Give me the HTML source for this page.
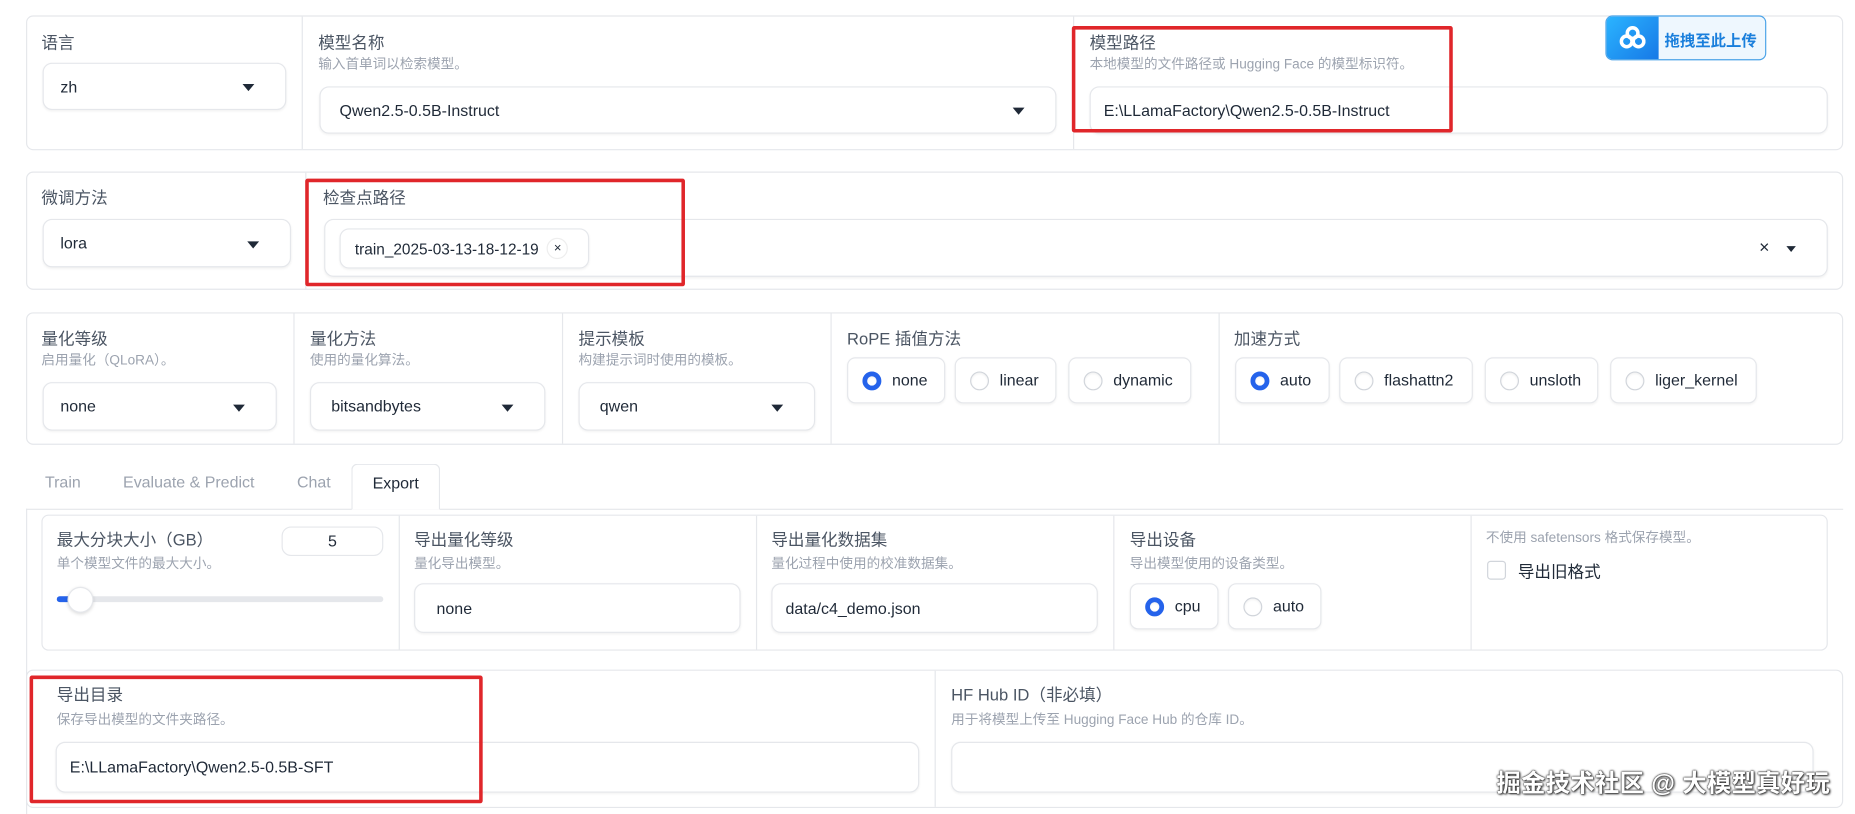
<!DOCTYPE html>
<html><head><meta charset="utf-8"><style>
*{box-sizing:border-box;margin:0;padding:0}
body{width:1855px;height:814px;overflow:hidden;background:#fff;font-family:"Liberation Sans","Noto Sans CJK SC",sans-serif;color:#374151}
#w{position:absolute;left:0;top:0;width:1568px;height:688px;transform:scale(1.18304);transform-origin:0 0}
.a{position:absolute}
.p{position:absolute;border:1px solid #e5e7eb;border-radius:6px;background:#fff}
.vl{position:absolute;width:1px;background:#e5e7eb}
.lb{position:absolute;font-size:14px;color:#4b5563;white-space:nowrap}
.sb{position:absolute;font-size:11.5px;color:#9ca3af;white-space:nowrap}
.in{position:absolute;border:1px solid #e5e7eb;border-radius:8px;background:#fff;box-shadow:0 1px 2px rgba(0,0,0,.05);font-size:13.5px;color:#1f2937;display:flex;align-items:center;padding-left:14px;white-space:nowrap}
.dd:after{content:"";position:absolute;right:26px;top:50%;margin-top:-2px;border-left:5px solid transparent;border-right:5px solid transparent;border-top:6px solid #1f2937}
.rd{position:absolute;border:1px solid #e5e7eb;border-radius:7px;background:#fff;box-shadow:0 1px 2px rgba(0,0,0,.05);font-size:13.5px;color:#1f2937;display:flex;align-items:center;padding-left:12px;height:39px;white-space:nowrap}
.rd i{display:inline-block;width:16px;height:16px;border-radius:50%;border:1px solid #d1d5db;margin-right:9px;box-shadow:inset 0 1px 2px rgba(0,0,0,.06)}
.rd i.on{border:4.5px solid #2563eb;background:#fff}
.red{position:absolute;border:3px solid #e0262a;border-radius:2px}
.tab{position:absolute;top:400px;font-size:13.5px;color:#9ca3af}
</style></head><body><div id="w">

<div class="p" style="left:22px;top:13px;width:1536px;height:114px"></div>
<div class="vl" style="left:255px;top:14px;height:112px"></div>
<div class="vl" style="left:907px;top:14px;height:112px"></div>
<div class="lb" style="left:35px;top:26px">语言</div>
<div class="in dd" style="left:36px;top:53px;width:206px;height:40px">zh</div>
<div class="lb" style="left:269px;top:26px">模型名称</div>
<div class="sb" style="left:269px;top:46px">输入首单词以检索模型。</div>
<div class="in dd" style="left:270px;top:73px;width:623px;height:40px;padding-left:16px">Qwen2.5-0.5B-Instruct</div>
<div class="lb" style="left:921px;top:26px">模型路径</div>
<div class="sb" style="left:921px;top:46px">本地模型的文件路径或 Hugging Face 的模型标识符。</div>
<div class="in" style="left:921px;top:73px;width:624px;height:40px;padding-left:11px">E:\LLamaFactory\Qwen2.5-0.5B-Instruct</div>
<div class="red" style="left:906px;top:22px;width:322px;height:90px"></div>
<div class="a" style="left:1357px;top:13px;width:136px;height:38px;border:1px solid #4ba3e8;border-radius:6px;background:#eef7fe;overflow:hidden">
 <div class="a" style="left:0;top:0;width:44px;height:38px;background:linear-gradient(135deg,#2bb4ff,#1677e6)"></div>
 <svg class="a" style="left:11px;top:8px" width="22" height="20" viewBox="0 0 22 20"><circle cx="11" cy="6" r="4.5" fill="none" stroke="#fff" stroke-width="3"/><circle cx="6" cy="13" r="4.5" fill="none" stroke="#fff" stroke-width="3"/><circle cx="16" cy="13" r="4.5" fill="none" stroke="#fff" stroke-width="3"/></svg>
 <div class="a" style="left:49px;top:10px;font-size:13px;font-weight:bold;color:#1a7fdc">拖拽至此上传</div>
</div>

<div class="p" style="left:22px;top:145px;width:1536px;height:100px"></div>
<div class="vl" style="left:258px;top:146px;height:98px"></div>
<div class="lb" style="left:35px;top:157px">微调方法</div>
<div class="in dd" style="left:36px;top:185px;width:210px;height:41px">lora</div>
<div class="lb" style="left:273px;top:157px">检查点路径</div>
<div class="in" style="left:274px;top:185px;width:1271px;height:49px"></div>
<div class="in" style="left:287px;top:193px;width:211px;height:34px;font-size:13px;padding-left:12px">train_2025-03-13-18-12-19<span style="display:inline-block;width:18px;height:18px;border-radius:50%;border:1px solid #eee;margin-left:7px;font-size:11px;text-align:center;line-height:16px">×</span></div>
<div class="a" style="left:1487px;top:201px;font-size:15px;color:#1f2937">×</div>
<div class="a" style="left:1510px;top:208px;border-left:4px solid transparent;border-right:4px solid transparent;border-top:5px solid #1f2937"></div>
<div class="red" style="left:258px;top:151px;width:321px;height:91px"></div>

<div class="p" style="left:22px;top:264px;width:1536px;height:112px"></div>
<div class="vl" style="left:248px;top:265px;height:110px"></div>
<div class="vl" style="left:475px;top:265px;height:110px"></div>
<div class="vl" style="left:702px;top:265px;height:110px"></div>
<div class="vl" style="left:1030px;top:265px;height:110px"></div>
<div class="lb" style="left:35px;top:276px">量化等级</div>
<div class="sb" style="left:35px;top:296px">启用量化（QLoRA）。</div>
<div class="in dd" style="left:36px;top:323px;width:198px;height:41px">none</div>
<div class="lb" style="left:262px;top:276px">量化方法</div>
<div class="sb" style="left:262px;top:296px">使用的量化算法。</div>
<div class="in dd" style="left:262px;top:323px;width:199px;height:41px;padding-left:17px">bitsandbytes</div>
<div class="lb" style="left:489px;top:276px">提示模板</div>
<div class="sb" style="left:489px;top:296px">构建提示词时使用的模板。</div>
<div class="in dd" style="left:489px;top:323px;width:200px;height:41px;padding-left:17px">qwen</div>
<div class="lb" style="left:716px;top:276px">RoPE 插值方法</div>
<div class="rd" style="left:716px;top:302px;width:83px"><i class="on"></i>none</div>
<div class="rd" style="left:807px;top:302px;width:86px"><i></i>linear</div>
<div class="rd" style="left:903px;top:302px;width:104px"><i></i>dynamic</div>
<div class="lb" style="left:1043px;top:276px">加速方式</div>
<div class="rd" style="left:1044px;top:302px;width:80px"><i class="on"></i>auto</div>
<div class="rd" style="left:1132px;top:302px;width:113px"><i></i>flashattn2</div>
<div class="rd" style="left:1255px;top:302px;width:96px"><i></i>unsloth</div>
<div class="rd" style="left:1361px;top:302px;width:124px"><i></i>liger_kernel</div>

<div class="tab" style="left:38px">Train</div>
<div class="tab" style="left:104px">Evaluate &amp; Predict</div>
<div class="tab" style="left:251px">Chat</div>
<div class="a" style="left:297px;top:392px;width:75px;height:39px;border:1px solid #e5e7eb;border-bottom:1px solid #fff;border-radius:5px 5px 0 0;background:#fff;font-size:13.5px;color:#1f2937;text-align:center;padding-top:8px;z-index:2">Export</div>
<div class="a" style="left:22px;top:430px;width:1536px;height:1px;background:#e5e7eb"></div>
<div class="vl" style="left:22px;top:430px;height:258px"></div>

<div class="p" style="left:35px;top:435px;width:1510px;height:115px"></div>
<div class="vl" style="left:337px;top:436px;height:113px"></div>
<div class="vl" style="left:639px;top:436px;height:113px"></div>
<div class="vl" style="left:941px;top:436px;height:113px"></div>
<div class="vl" style="left:1243px;top:436px;height:113px"></div>
<div class="lb" style="left:48px;top:446px">最大分块大小（GB）</div>
<div class="sb" style="left:48px;top:468px">单个模型文件的最大大小。</div>
<div class="in" style="left:238px;top:445px;width:86px;height:25px;justify-content:center;padding-left:0;box-shadow:none">5</div>
<div class="a" style="left:48px;top:504px;width:276px;height:5px;border-radius:3px;background:#e5e7eb"></div>
<div class="a" style="left:48px;top:504px;width:12px;height:5px;border-radius:3px;background:#2563eb"></div>
<div class="a" style="left:57px;top:496px;width:22px;height:22px;border-radius:50%;background:#fff;border:1px solid #e5e7eb;box-shadow:0 1px 3px rgba(0,0,0,.15)"></div>
<div class="lb" style="left:350px;top:446px">导出量化等级</div>
<div class="sb" style="left:350px;top:468px">量化导出模型。</div>
<div class="in" style="left:350px;top:493px;width:276px;height:42px;padding-left:18px">none</div>
<div class="lb" style="left:652px;top:446px">导出量化数据集</div>
<div class="sb" style="left:652px;top:468px">量化过程中使用的校准数据集。</div>
<div class="in" style="left:652px;top:493px;width:276px;height:42px;padding-left:11px">data/c4_demo.json</div>
<div class="lb" style="left:955px;top:446px">导出设备</div>
<div class="sb" style="left:955px;top:468px">导出模型使用的设备类型。</div>
<div class="rd" style="left:955px;top:493px;width:75px"><i class="on"></i>cpu</div>
<div class="rd" style="left:1038px;top:493px;width:79px"><i></i>auto</div>
<div class="sb" style="left:1256px;top:446px">不使用 safetensors 格式保存模型。</div>
<div class="a" style="left:1257px;top:474px;width:16px;height:16px;border:1px solid #d1d5db;border-radius:3px"></div>
<div class="a" style="left:1283px;top:473px;font-size:14px;color:#1f2937">导出旧格式</div>

<div class="p" style="left:22px;top:566px;width:1536px;height:117px"></div>
<div class="vl" style="left:790px;top:567px;height:115px"></div>
<div class="lb" style="left:48px;top:577px">导出目录</div>
<div class="sb" style="left:48px;top:600px">保存导出模型的文件夹路径。</div>
<div class="in" style="left:47px;top:627px;width:730px;height:43px;padding-left:11px">E:\LLamaFactory\Qwen2.5-0.5B-SFT</div>
<div class="lb" style="left:804px;top:577px">HF Hub ID（非必填）</div>
<div class="sb" style="left:804px;top:600px">用于将模型上传至 Hugging Face Hub 的仓库 ID。</div>
<div class="in" style="left:804px;top:627px;width:729px;height:43px"></div>
<div class="red" style="left:25px;top:571px;width:383px;height:108px"></div>
<div class="a" style="left:1265px;top:645px;font-size:20.5px;font-weight:bold;color:#fff;text-shadow:0 0 2px #333,0 0 1px #000,1px 1px 2px #444;white-space:nowrap;letter-spacing:0.3px">掘金技术社区 @ 大模型真好玩</div>

</div></body></html>
